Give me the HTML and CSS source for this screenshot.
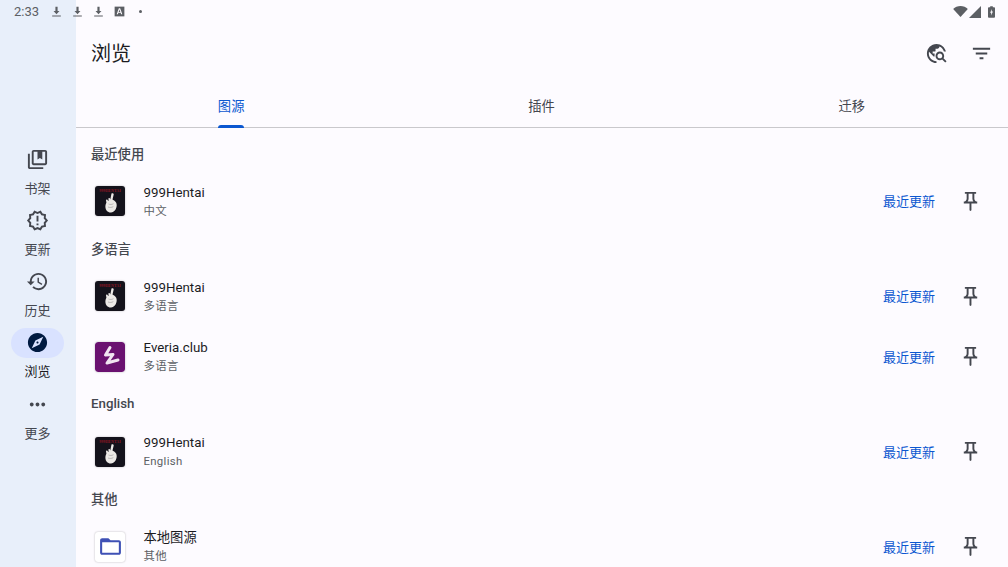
FILE: index.html
```html
<!DOCTYPE html>
<html lang="zh">
<head>
  <meta charset="UTF-8">
  <title>浏览</title>
  <link rel="stylesheet" href="styles.css">
</head>
<body>

<svg class="defs" width="0" height="0">
  <symbol id="i-download" viewBox="0 0 24 24"><path d="M10 3h4v8h3.500L12 17l-5.500-6H10zM4 19.500h16V21H4z"/></symbol>
  <symbol id="i-pin" viewBox="0 0 24 24"><path d="M14 4v5c0 1.120.37 2.160 1 3H9c.65-.86 1-1.900 1-3V4h4m3-2H7c-.55 0-1 .45-1 1s.45 1 1 1h1v5c0 1.660-1.340 3-3 3v2h5.970v7l1 1 1-1v-7H19v-2c-1.660 0-3-1.340-3-3V4h1c.55 0 1-.45 1-1s-.45-1-1-1z"/></symbol>
  <symbol id="i-hand" viewBox="0 0 14 22">
    <path d="M8.500 .5c1-.4 2.300 0 2.200 1.100L9.500 6.500l2 1.300c1.500 1 2.300 2.700 2.200 4.800-.2 3.500-2.300 6.700-5.700 6.900-3.200.2-5.500-2.300-5.600-5.500-.1-1.600.3-3 1-4.300L3 7.300c-.1-1 1.400-1.300 1.700-.3l.3 1 .7-.5-.3-1.500c-.1-1 1.300-1.300 1.600-.4l.3.9z" fill="#ece9e6"/>
    <path d="M5.500 11c1.500.7 3.400.6 5-.3M5 14c1.700.7 3.800.6 5.300-.4" fill="none" stroke="#9a9799" stroke-width=".6"/>
  </symbol>
  <symbol id="i-everia" viewBox="0 0 30 30">
    <rect width="30" height="30" rx="3" fill="#6a1170"/>
    <path d="M15 5.500 10.500 13l7.500-.5-6 8.500 11-3" fill="none" stroke="#f1e4f1" stroke-width="3" stroke-linecap="round" stroke-linejoin="round"/>
  </symbol>
</svg>

<div class="status-bar">
  <div class="status-left">
    <span class="clock">2:33</span>
    <svg class="st-icon"><use href="#i-download"/></svg>
    <svg class="st-icon"><use href="#i-download"/></svg>
    <svg class="st-icon"><use href="#i-download"/></svg>
    <svg class="st-icon" viewBox="0 0 24 24"><path d="M3 3h18v18H3z"/><path fill="#fdfbff" d="M10.800 6h2.400l4 11h-2.300l-.8-2.500h-4.200L9.100 17H6.800zm-.3 6.700h3l-1.500-4.500z"/></svg>
    <span class="st-dot"></span>
  </div>
  <div class="status-right">
    <svg class="sys-wifi" viewBox="0 0 16 12"><path d="M0 3.200C2 1.200 4.900 0 8 0s6 1.200 8 3.200L8 12z"/></svg>
    <svg class="sys-signal" viewBox="0 0 12 12"><path d="M12 0v12H0z"/></svg>
    <svg class="sys-batt" viewBox="0 0 8 13"><path d="M2.500 0h3v1H7c.6 0 1 .4 1 1v10c0 .6-.4 1-1 1H1c-.6 0-1-.4-1-1V2c0-.6.4-1 1-1h1.500z"/><path fill="#fdfbff" d="M4.600 3 2.400 7.300h1.300L3.400 10.500 5.700 6H4.300z"/></svg>
  </div>
</div>

<div class="app">
  <nav class="rail">
    <div class="rail-item">
      <div class="rail-icon"><svg viewBox="0 0 24 24"><path d="M4 6H2v14c0 1.100.9 2 2 2h14v-2H4V6zm16-4H8c-1.100 0-2 .9-2 2v12c0 1.100.9 2 2 2h12c1.100 0 2-.9 2-2V4c0-1.100-.9-2-2-2zm0 14H8V4h4v8l2.500-1.500L17 12V4h3v12z"/></svg></div>
      <div class="rail-label">书架</div>
    </div>
    <div class="rail-item">
      <div class="rail-icon"><svg viewBox="0 0 24 24"><path d="M23 12l-2.440-2.780.34-3.680-3.610-.82-1.890-3.180L12 3 8.600 1.540 6.710 4.720l-3.610.81.34 3.680L1 12l2.440 2.780-.34 3.690 3.610.82 1.890 3.180L12 21l3.400 1.460 1.890-3.180 3.610-.82-.34-3.680L23 12zm-4.510 2.110l.26 2.790-2.740.62-1.430 2.410L12 18.820l-2.580 1.110-1.430-2.410-2.740-.62.26-2.800L3.660 12l1.850-2.120-.26-2.780 2.740-.61 1.430-2.410L12 5.180l2.580-1.110 1.430 2.410 2.740.62-.26 2.790L20.340 12l-1.850 2.110zM11 15h2v2h-2zm0-8h2v6h-2z"/></svg></div>
      <div class="rail-label">更新</div>
    </div>
    <div class="rail-item">
      <div class="rail-icon"><svg viewBox="0 0 24 24"><path d="M13 3c-4.970 0-9 4.030-9 9H1l3.890 3.890.07.14L9 12H6c0-3.870 3.130-7 7-7s7 3.130 7 7-3.130 7-7 7c-1.930 0-3.680-.79-4.940-2.060l-1.420 1.420C8.270 19.990 10.510 21 13 21c4.970 0 9-4.030 9-9s-4.030-9-9-9zm-1 5v5l4.280 2.540.72-1.210-3.500-2.080V8H12z"/></svg></div>
      <div class="rail-label">历史</div>
    </div>
    <div class="rail-item active">
      <div class="rail-icon"><svg viewBox="0 0 24 24"><path d="M12 10.900c-.61 0-1.100.49-1.100 1.100s.49 1.100 1.100 1.100c.61 0 1.100-.49 1.100-1.100s-.49-1.100-1.100-1.100zM12 2C6.480 2 2 6.480 2 12s4.480 10 10 10 10-4.480 10-10S17.520 2 12 2zm2.190 12.190L6 18l3.810-8.190L18 6l-3.810 8.190z"/></svg></div>
      <div class="rail-label">浏览</div>
    </div>
    <div class="rail-item">
      <div class="rail-icon"><svg viewBox="0 0 24 24"><path d="M6 10c-1.100 0-2 .9-2 2s.9 2 2 2 2-.9 2-2-.9-2-2-2zm12 0c-1.100 0-2 .9-2 2s.9 2 2 2 2-.9 2-2-.9-2-2-2zm-6 0c-1.100 0-2 .9-2 2s.9 2 2 2 2-.9 2-2-.9-2-2-2z"/></svg></div>
      <div class="rail-label">更多</div>
    </div>
  </nav>

  <main class="content">
    <header class="app-bar">
      <h1>浏览</h1>
      <div class="bar-actions">
        <svg viewBox="0 0 24 24"><path d="M19.300 16.900c.4-.7.7-1.500.7-2.400 0-2.500-2-4.500-4.500-4.500S11 12 11 14.500s2 4.500 4.500 4.500c.9 0 1.700-.3 2.400-.7l3.200 3.200 1.400-1.400-3.200-3.200zm-3.800.1c-1.400 0-2.500-1.100-2.500-2.500s1.100-2.500 2.500-2.500 2.500 1.100 2.500 2.500-1.100 2.500-2.500 2.500zM12 20v2C6.480 22 2 17.520 2 12S6.480 2 12 2c4.840 0 8.870 3.440 9.800 8h-2.070c-.64-2.460-2.400-4.470-4.730-5.410V5c0 1.100-.9 2-2 2h-2v2c0 .55-.45 1-1 1H8v2h2v3H9l-4.790-4.790C4.080 10.790 4 11.380 4 12c0 4.410 3.590 8 8 8z"/></svg>
        <svg viewBox="0 0 24 24"><path d="M10 18h4v-2h-4v2zM3 6v2h18V6H3zm3 7h12v-2H6v2z"/></svg>
      </div>
    </header>

    <div class="tabs">
      <div class="tab active"><span>图源</span></div>
      <div class="tab"><span>插件</span></div>
      <div class="tab"><span>迁移</span></div>
    </div>

    <div class="list">
      <div class="section">最近使用</div>
      <div class="row">
        <div class="app-icon hentai-icon"><span>999HENTAI</span><svg><use href="#i-hand"/></svg></div>
        <div class="row-text"><div class="row-title">999Hentai</div><div class="row-sub">中文</div></div>
        <span class="row-action">最近更新</span>
        <svg class="pin"><use href="#i-pin"/></svg>
      </div>

      <div class="section">多语言</div>
      <div class="row">
        <div class="app-icon hentai-icon"><span>999HENTAI</span><svg><use href="#i-hand"/></svg></div>
        <div class="row-text"><div class="row-title">999Hentai</div><div class="row-sub">多语言</div></div>
        <span class="row-action">最近更新</span>
        <svg class="pin"><use href="#i-pin"/></svg>
      </div>
      <div class="row">
        <svg class="app-icon"><use href="#i-everia"/></svg>
        <div class="row-text"><div class="row-title">Everia.club</div><div class="row-sub">多语言</div></div>
        <span class="row-action">最近更新</span>
        <svg class="pin"><use href="#i-pin"/></svg>
      </div>

      <div class="section">English</div>
      <div class="row">
        <div class="app-icon hentai-icon"><span>999HENTAI</span><svg><use href="#i-hand"/></svg></div>
        <div class="row-text"><div class="row-title">999Hentai</div><div class="row-sub">English</div></div>
        <span class="row-action">最近更新</span>
        <svg class="pin"><use href="#i-pin"/></svg>
      </div>

      <div class="section">其他</div>
      <div class="row">
        <div class="app-icon local-icon"><svg viewBox="0 0 24 24"><path d="M20 6h-8l-2-2H4c-1.100 0-1.990.9-1.990 2L2 18c0 1.100.9 2 2 2h16c1.100 0 2-.9 2-2V8c0-1.100-.9-2-2-2zm0 12H4V8h16v10z"/></svg></div>
        <div class="row-text"><div class="row-title">本地图源</div><div class="row-sub">其他</div></div>
        <span class="row-action">最近更新</span>
        <svg class="pin"><use href="#i-pin"/></svg>
      </div>
    </div>
  </main>
</div>

</body>
</html>
```

FILE: styles.css
```css
html, body {
  margin: 0;
  height: 100%;
  overflow: hidden;
}
body {
  font-family: Roboto, "Noto Sans CJK SC", sans-serif;
  background: #fdfbff;
  color: #1b1b1f;
}
svg {
  display: block;
  fill: currentColor;
}
.defs {
  position: absolute;
}

/* status bar lies over the app */
.status-bar {
  position: absolute;
  top: 0;
  left: 0;
  right: 0;
  height: 23px;
  padding: 0 13px 0 14px;
  display: flex;
  justify-content: space-between;
  align-items: center;
  color: #5c5f64;
}
.status-left {
  display: flex;
  align-items: center;
}
.clock {
  font-size: 13px;
  width: 36px;
}
.st-icon {
  width: 13px;
  height: 13px;
  margin-right: 8px;
}
.st-dot {
  width: 3px;
  height: 3px;
  margin-left: 5px;
  border-radius: 50%;
  background: #5c5f64;
}
.status-right {
  display: flex;
  align-items: center;
}
.sys-wifi {
  width: 15px;
  height: 11px;
}
.sys-signal {
  width: 12px;
  height: 12px;
  margin-left: 1px;
}
.sys-batt {
  width: 7px;
  height: 12px;
  margin-left: 7px;
}

.app {
  display: flex;
  height: 100%;
}

.rail {
  width: 76px;
  flex-shrink: 0;
  box-sizing: border-box;
  padding: 144px 1px 0 0;
  background: #e8effa;
}
.rail-item {
  height: 61.250px;
  display: flex;
  flex-direction: column;
  align-items: center;
  color: #44474f;
}
.rail-icon {
  width: 53px;
  height: 30px;
  border-radius: 15px;
  display: flex;
  align-items: center;
  justify-content: center;
  color: #44474f;
}
.rail-icon svg {
  width: 23px;
  height: 23px;
}
.rail-label {
  font-size: 13px;
  line-height: 18px;
  margin-top: 5.500px;
}
.rail-item.active .rail-icon {
  background: #d9e2ff;
  color: #001a41;
}
.rail-item.active .rail-label {
  color: #1b1b1f;
}

.content {
  flex: 1;
  min-width: 0;
  padding-top: 23px;
  box-sizing: border-box;
}
.app-bar {
  height: 61px;
  box-sizing: border-box;
  padding: 0 15px 3px;
  display: flex;
  align-items: center;
  justify-content: space-between;
}
.app-bar h1 {
  margin: 0;
  font-size: 20px;
  font-weight: 400;
}
.bar-actions {
  display: flex;
  gap: 22px;
  margin-top: 3px;
  color: #44474f;
}
.bar-actions svg {
  width: 23px;
  height: 23px;
}

.tabs {
  display: flex;
  height: 44px;
  box-sizing: border-box;
  padding-right: 1px;
  border-bottom: 1px solid #c9c8cc;
}
.tab {
  flex: 1;
  display: flex;
  align-items: center;
  justify-content: center;
  font-size: 13.300px;
  color: #44474f;
}
.tab span {
  position: relative;
  padding-top: 2px;
  line-height: 41px;
}
.tab.active {
  color: #0b57d0;
}
.tab.active span::after {
  content: "";
  position: absolute;
  left: 0;
  right: 0;
  bottom: -1px;
  height: 3px;
  border-radius: 3px 3px 0 0;
  background: #0b57d0;
}

.list {
  padding-top: 8.500px;
}
.section {
  height: 34.250px;
  box-sizing: border-box;
  padding: 0 15px 1px;
  display: flex;
  align-items: center;
  font-size: 13.300px;
  font-weight: 500;
  color: #44474f;
}
.row {
  height: 60.750px;
  padding: 0 26px 0 19px;
  display: flex;
  align-items: center;
}
.app-icon {
  width: 30px;
  height: 30px;
  flex-shrink: 0;
  border-radius: 3px;
  box-shadow: 0 0 2px rgba(0, 0, 0, 0.3);
}
.hentai-icon {
  box-sizing: border-box;
  padding-top: 2px;
  background: #14121b;
  display: flex;
  flex-direction: column;
  align-items: center;
  overflow: hidden;
}
.hentai-icon span {
  font-family: "Liberation Serif", serif;
  font-size: 4px;
  line-height: 5px;
  font-weight: 700;
  color: #8c1522;
}
.hentai-icon svg {
  width: 14px;
  height: 22px;
}
.local-icon {
  background: #fff;
  display: flex;
  align-items: center;
  justify-content: center;
  color: #3f51b5;
}
.local-icon svg {
  width: 25px;
  height: 25px;
}
.row-text {
  flex: 1;
  margin-left: 18.500px;
}
.row-title {
  font-size: 13.300px;
  line-height: 19px;
}
.row-sub {
  font-size: 11.400px;
  line-height: 17px;
  margin-top: 1px;
  color: #5c5f64;
  letter-spacing: 0.3px;
}
.row-action {
  font-size: 13px;
  color: #0b57d0;
  margin: 0 24px 1px 0;
}
.pin {
  width: 23px;
  height: 23px;
  color: #44474f;
}
```
